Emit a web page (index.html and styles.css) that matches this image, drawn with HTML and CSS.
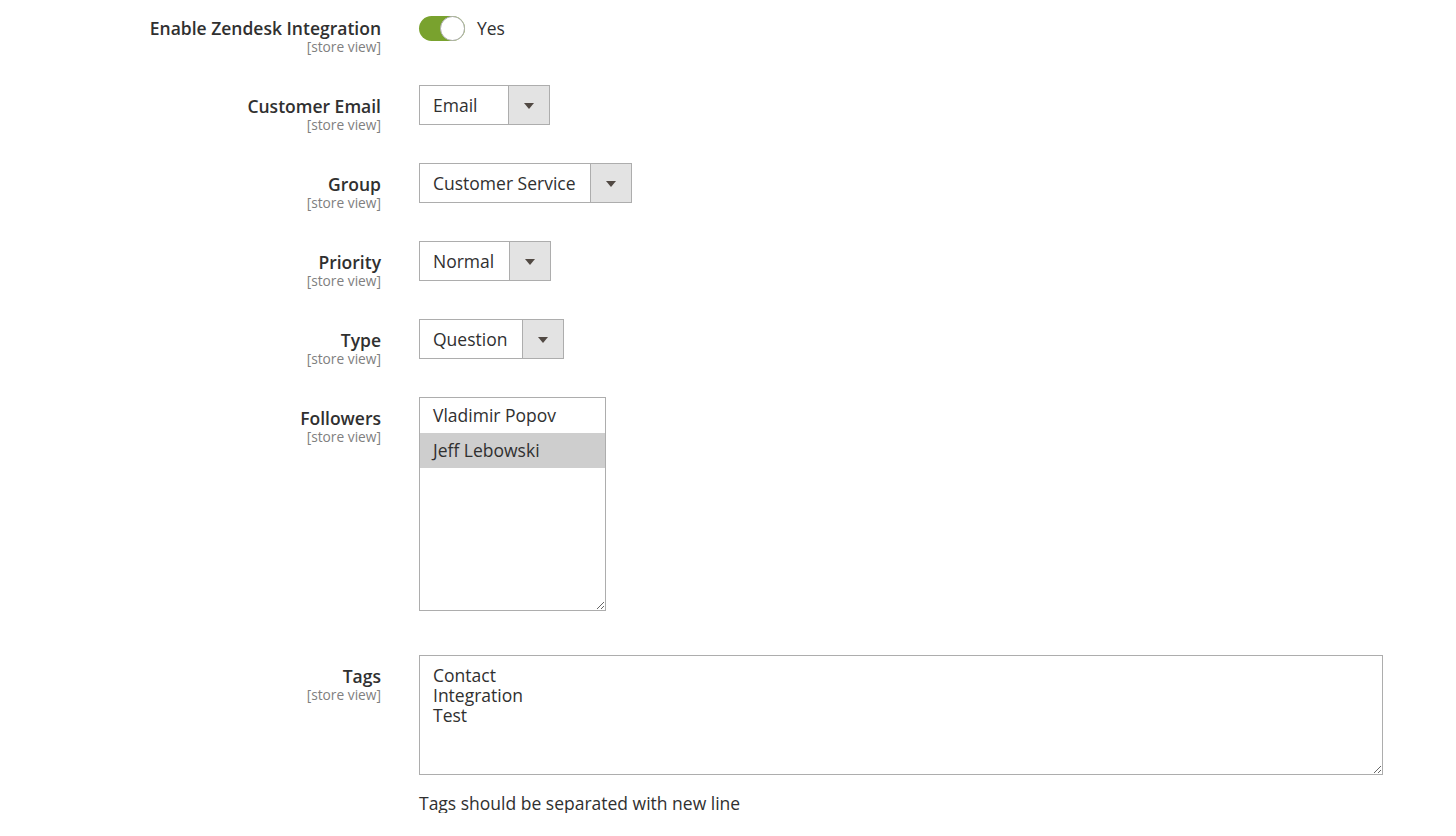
FILE: index.html
```html
<!DOCTYPE html>
<html lang="en">
<head>
<meta charset="utf-8">
<title>Zendesk Integration</title>
<link rel="stylesheet" href="styles.css">
</head>
<body>
<form class="config">
  <div class="field">
    <div class="label"><span class="name">Enable Zendesk Integration</span><span class="scope">[store view]</span></div>
    <div class="control control-toggle">
      <span class="toggle"><span class="knob"></span></span>
      <span class="toggle-text">Yes</span>
    </div>
  </div>
  <div class="field">
    <div class="label"><span class="name">Customer Email</span><span class="scope">[store view]</span></div>
    <div class="control">
      <div class="select w-email"><span class="value">Email</span><span class="btn"><span class="arrow"></span></span></div>
    </div>
  </div>
  <div class="field">
    <div class="label"><span class="name">Group</span><span class="scope">[store view]</span></div>
    <div class="control">
      <div class="select w-group"><span class="value">Customer Service</span><span class="btn"><span class="arrow"></span></span></div>
    </div>
  </div>
  <div class="field">
    <div class="label"><span class="name">Priority</span><span class="scope">[store view]</span></div>
    <div class="control">
      <div class="select w-priority"><span class="value">Normal</span><span class="btn"><span class="arrow"></span></span></div>
    </div>
  </div>
  <div class="field">
    <div class="label"><span class="name">Type</span><span class="scope">[store view]</span></div>
    <div class="control">
      <div class="select w-type"><span class="value">Question</span><span class="btn"><span class="arrow"></span></span></div>
    </div>
  </div>
  <div class="field field-multi">
    <div class="label"><span class="name">Followers</span><span class="scope">[store view]</span></div>
    <div class="control">
      <div class="listbox">
        <div class="option">Vladimir Popov</div>
        <div class="option selected">Jeff Lebowski</div>
      </div>
    </div>
  </div>
  <div class="field">
    <div class="label"><span class="name">Tags</span><span class="scope">[store view]</span></div>
    <div class="control">
      <textarea class="textarea">Contact
Integration
Test</textarea>
      <div class="note">Tags should be separated with new line</div>
    </div>
  </div>
</form>
</body>
</html>
```
FILE: styles.css
```css
html, body {
  margin: 0;
  padding: 0;
  background: #ffffff;
}
body {
  font-family: "Open Sans", "Liberation Sans", sans-serif;
  color: #303030;
}
.config {
  display: flex;
  flex-direction: column;
  gap: 31px;
  padding-top: 7px;
}
.field {
  display: grid;
  grid-template-columns: 381px 964px;
  column-gap: 38px;
  align-items: start;
}
.field-multi {
  margin-bottom: 13px;
}
.label {
  display: flex;
  flex-direction: column;
  align-items: flex-end;
  text-align: right;
  padding-top: 9px;
}
.name {
  font-size: 17.5px;
  font-weight: 600;
  line-height: 24px;
  color: #303030;
}
.scope {
  font-size: 13.75px;
  line-height: 14px;
  color: #808080;
}
.control {
  display: flex;
  flex-direction: column;
  align-items: flex-start;
}
.control-toggle {
  flex-direction: row;
  align-items: center;
  height: 42px;
  gap: 12px;
}
.toggle {
  position: relative;
  display: block;
  width: 46px;
  height: 25px;
  border-radius: 13px;
  background: #79a22e;
  box-sizing: border-box;
}
.knob {
  position: absolute;
  right: 0;
  top: 0;
  width: 25px;
  height: 25px;
  border-radius: 50%;
  background: #ffffff;
  border: 1px solid #adadad;
  box-sizing: border-box;
}
.toggle-text {
  font-size: 17.5px;
  line-height: 24px;
  color: #303030;
}
.select {
  display: flex;
  height: 40px;
  box-sizing: border-box;
  border: 1px solid #adadad;
  background: #ffffff;
}
.select .value {
  flex: 1;
  padding-left: 13px;
  font-size: 17.5px;
  line-height: 38px;
  color: #303030;
  white-space: nowrap;
}
.select .btn {
  width: 40px;
  border-left: 1px solid #adadad;
  background: #e3e3e3;
  display: flex;
  align-items: center;
  justify-content: center;
}
.arrow {
  width: 0;
  height: 0;
  border-left: 5px solid transparent;
  border-right: 5px solid transparent;
  border-top: 6px solid #514943;
  margin-top: 1px;
}
.w-email { width: 131px; }
.w-group { width: 213px; }
.w-priority { width: 132px; }
.w-type { width: 145px; }
.listbox {
  width: 187px;
  height: 214px;
  box-sizing: border-box;
  border: 1px solid #adadad;
  overflow: auto;
  resize: both;
  background: #ffffff;
}
.option {
  height: 35px;
  line-height: 35px;
  padding-left: 13px;
  font-size: 17.5px;
  color: #303030;
}
.option.selected {
  background: #cecece;
}
.textarea {
  width: 964px;
  height: 120px;
  box-sizing: border-box;
  border: 1px solid #adadad;
  border-radius: 0;
  padding: 9px 13px;
  margin: 0;
  font-family: "Open Sans", "Liberation Sans", sans-serif;
  font-size: 17.5px;
  line-height: 20px;
  color: #303030;
  resize: both;
  outline: none;
}
.note {
  margin-top: 18px;
  font-size: 17.5px;
  line-height: 20px;
  color: #303030;
}
```
